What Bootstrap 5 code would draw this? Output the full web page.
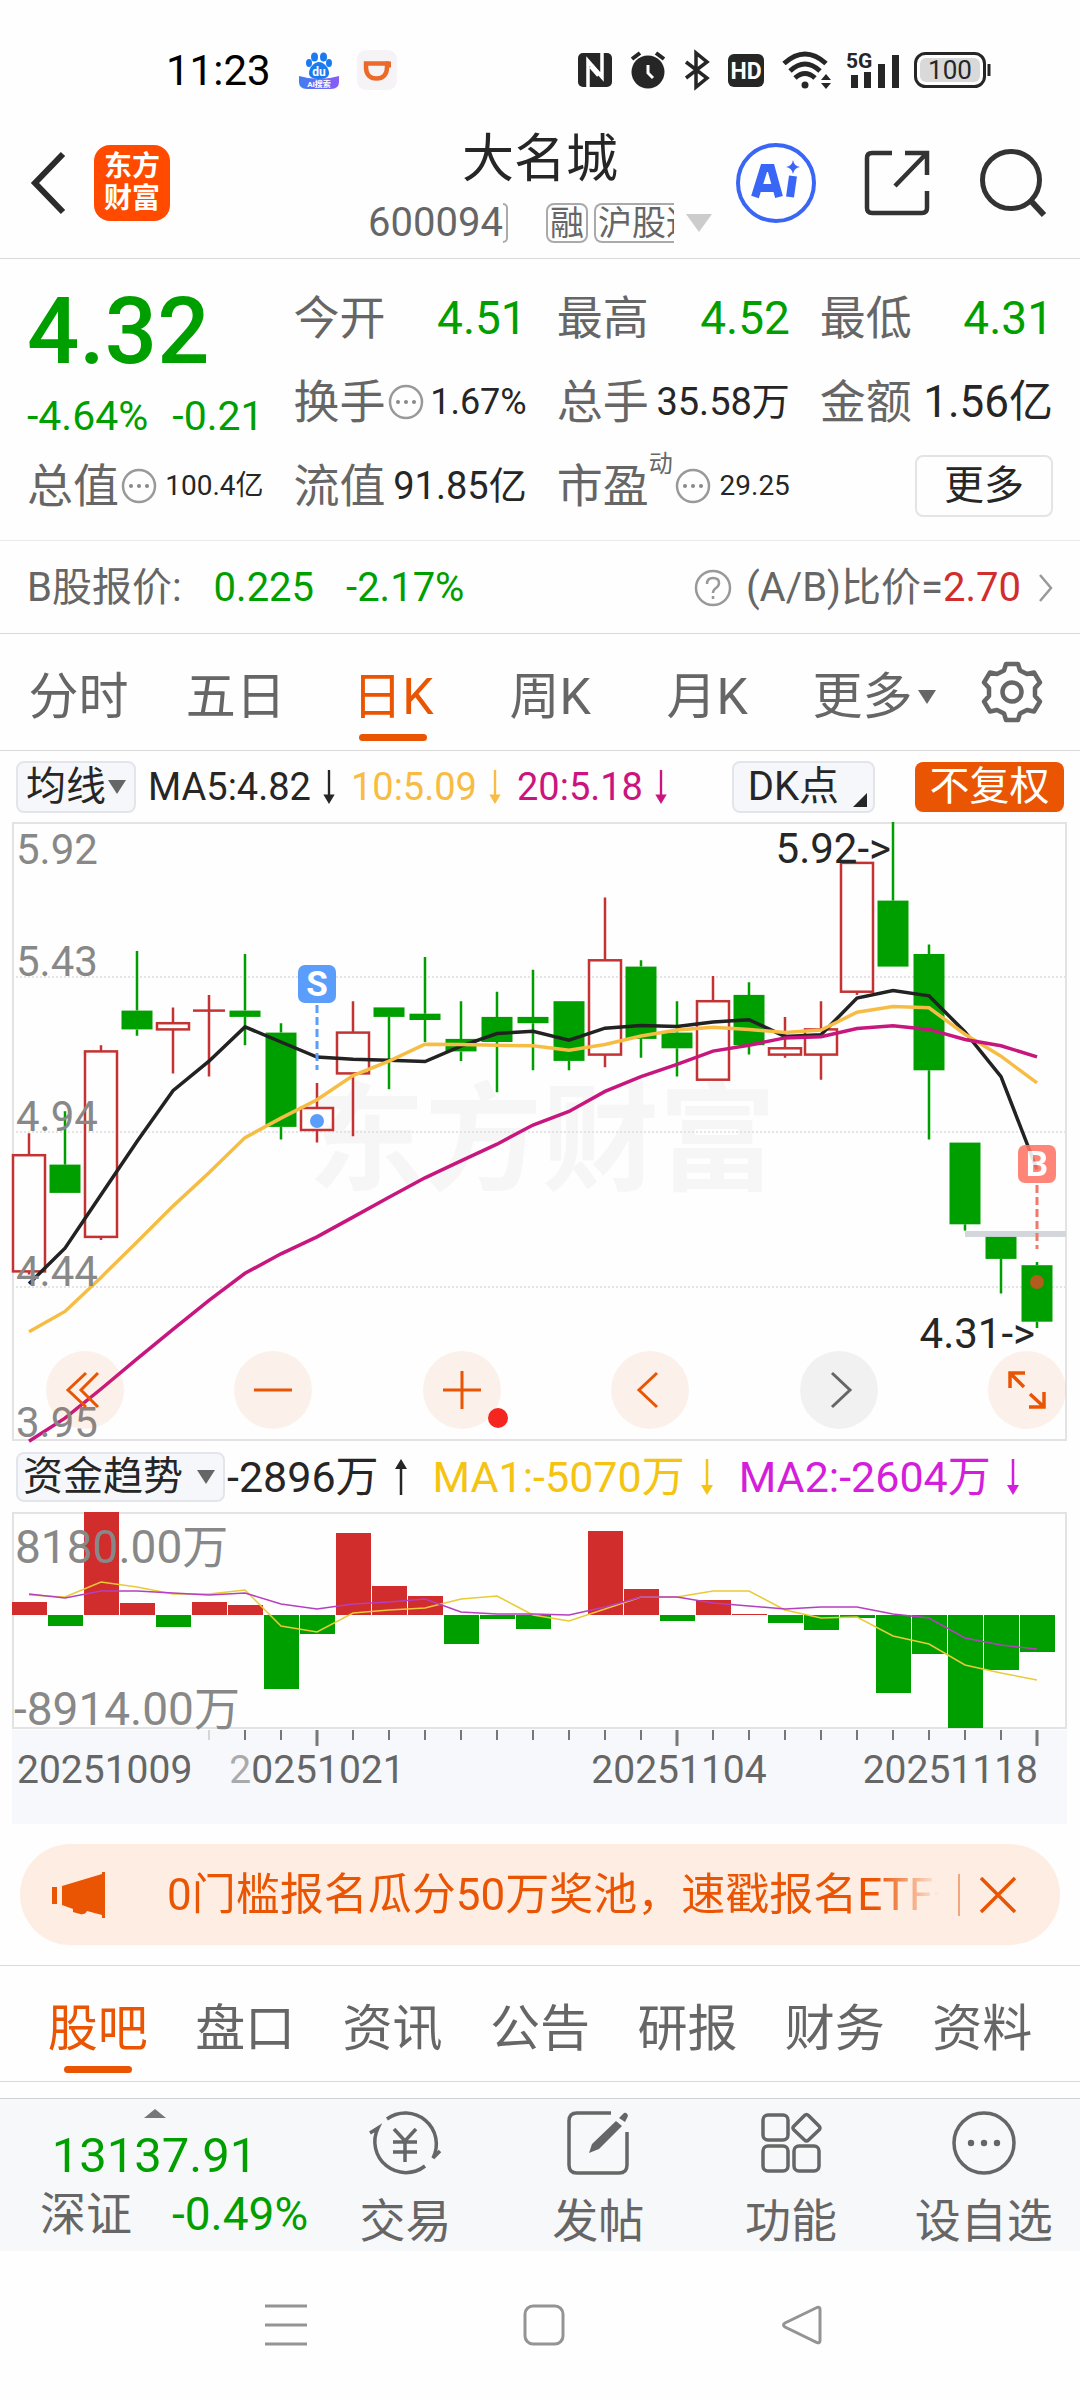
<!DOCTYPE html>
<html lang="zh-CN">
<head>
<meta charset="utf-8">
<meta name="viewport" content="width=device-width, initial-scale=1">
<title>大名城 600094</title>
<link href="https://cdn.jsdelivr.net/npm/bootstrap@5.3.0/dist/css/bootstrap.min.css" rel="stylesheet">
<style>
:root{--up:#d12d2d;--down:#009f00;--accent:#ea5504;--ink:#262626;--muted-ink:#666;--rule:#d9d9d9}
body{font-family:Roboto,"Noto Sans CJK SC",sans-serif;color:var(--ink);background:#fefefe;font-size:40px;line-height:1.5}
svg{display:block;flex:none;overflow:visible}
button,a{color:inherit;text-decoration:none}
.flat{background:none;border:0;padding:0;color:inherit;font:inherit}
.down{color:var(--down)}
.up{color:var(--up)}
.rule-b{border-bottom:1px solid var(--rule)}
.gap-l2{margin-left:2px}.gap-l6{margin-left:6px}.gap-l12{margin-left:12px}.gap-l14{margin-left:14px}.gap-l18{margin-left:18px}.gap-l24{margin-left:24px}.gap-l28{margin-left:28px}.gap-l32{margin-left:32px}.gap-l38{margin-left:38px}.gap-l40{margin-left:40px}.gap-l48{margin-left:48px}.gap-l50{margin-left:50px}
/* status bar */
.statusbar{padding:46px 88px 0 166px;height:94px;color:#000}
.sysicons{color:#262626}
.clock{font-size:42px}
/* header */
.apphead{padding:26px 34px 12px 31px}
.applogo{width:76px;height:76px;border-radius:16px;background:#ff4a00;color:#fff;font-size:28px;line-height:32px;font-weight:700;margin-left:29px}
.stockname{font-size:52px;line-height:80px}
.codeline{font-size:40px;line-height:46px;color:var(--muted-ink)}
.tagbox{border:2px solid #aaa;border-radius:8px;height:40px;line-height:36px;font-size:34px;padding:0 2px;white-space:nowrap}
.tagcut{width:80px;overflow:hidden;border-right:0;border-radius:8px 0 0 8px}
.tagend{width:5px;height:40px;border:2px solid #aaa;border-left:0;border-radius:0 8px 8px 0}
/* quote grid */
.quote{display:grid;grid-template-columns:repeat(4,1fr);column-gap:30px;padding:17px 27px 12px;border-bottom:1px solid #eaeaea}
.quote .cellrow{height:84px;display:flex;align-items:center;justify-content:space-between;white-space:nowrap}
.quote .lbl{font-size:46px;color:var(--muted-ink);display:flex;align-items:center}
.quote .lbl svg{margin-left:2px}
.bigcell{grid-row:span 2;color:var(--down)}
.bigprice{font-size:92px;line-height:112px;font-weight:500}
.chg{font-size:41px;line-height:56px}
.v46{font-size:46px}.v44{font-size:44px}.v38{font-size:38px}.v36{font-size:36px}.v28{font-size:28px}
.dyn{font-size:24px;line-height:24px;align-self:flex-start}
.morebtn{width:138px;height:62px;border:2px solid #e4e4e4;border-radius:8px;font-size:40px;line-height:58px}
.bshare{padding:17px 27px 15px;line-height:60px;color:var(--muted-ink)}
/* tabs */
.tabs{font-size:50px;line-height:60px;color:var(--muted-ink)}
.tabs .nav-link{padding:33px 0 8px;color:inherit;text-align:center;white-space:nowrap}
.tabs .nav-link::after{content:"";display:block;width:68px;height:7px;border-radius:4px;margin:7px auto 0}
.tabs .nav-link.active{color:var(--accent)}
.tabs .nav-link.active::after{background:var(--accent)}
.tabs .withmenu{padding-left:20px}
.gearcell{width:137px;height:116px}
.infotabs{padding:0 24px}
/* indicator rows */
.indrow{padding:10px 16px 9px;font-size:38px;line-height:50px;white-space:nowrap}
.pick{background:#f6f7fb;border:2px solid #e3e5ea;border-radius:8px;font-size:40px;line-height:48px;height:52px;padding:0 8px}
.pickdk{padding:0 6px 0 14px}
.adj{background:var(--accent);color:#fff;border-radius:8px;width:149px;height:50px;line-height:50px;font-size:40px}
.arrow{margin:0 16px 0 12px}
.flowrow{font-size:43px;padding:11px 16px 10px}
.flowrow .pick{height:50px;padding-left:5px}
.flowrow .arrow{margin:0 26px 0 16px}
.ten{color:#f8bc42}.twenty{color:#cc1480}.flow1{color:#f5c413}.flow2{color:#d41edb}
.plot{margin:0 13px 0 12px}
.plot>svg{width:100%;height:auto}
.zoombar{left:34px;right:1px;bottom:12px}
.roundbtn{width:78px;height:78px;border-radius:50%;background:rgba(234,85,4,.08);color:var(--accent)}
.roundbtn.off{background:rgba(0,0,0,.05);color:#666}
.reddot{right:-7px;bottom:1px;width:20px;height:20px;border-radius:50%;background:#f5261f}
/* notice */
.notice{margin:20px 20px 20px;height:101px;border-radius:51px;background:#fdede3;color:var(--accent);font-size:44px;padding:0 44px 0 32px}
.notice .msg{flex:1 1 0;margin-left:61px;overflow:hidden;white-space:nowrap;-webkit-mask-image:linear-gradient(90deg,#000 92%,transparent);mask-image:linear-gradient(90deg,#000 92%,transparent)}
.notice .bar{width:2px;height:42px;background:#f0a67e;margin:0 20px 0 19px}
/* bottom bar */
.dock{margin-top:16px;border-top:1px solid #cfd3d8;background:#f7f8fa;height:153px;color:var(--muted-ink)}
.indexcell{flex:none;width:309px;padding-top:10px}
.indexval{font-size:49px;line-height:56px;padding-top:10px}
.indexsub{font-size:46px;line-height:60px;padding-left:40px;white-space:nowrap}
.dock .tool{flex:1 1 0;font-size:46px;line-height:60px;padding-top:10px}
.dock .tool svg{margin:0 auto 14px}
.sysnav{padding:52px 149px 0 157px;color:#949494}
</style>
</head>
<body>
<div class="statusbar d-flex align-items-center">
  <span class="clock">11:23</span>
  <svg class="gap-l28" width="40" height="40" viewBox="0 0 40 40" role="img" aria-label="百度">
    <defs><linearGradient id="bd" x1="0" x2="1"><stop offset="0" stop-color="#3f7df5"/><stop offset="1" stop-color="#8a5cf6"/></linearGradient></defs>
    <g fill="#1a7af0"><ellipse cx="15.5" cy="7" rx="3.5" ry="4.5"/><ellipse cx="24.5" cy="7" rx="3.5" ry="4.5"/><ellipse cx="10" cy="13" rx="3" ry="4"/><ellipse cx="30" cy="13" rx="3" ry="4"/><path d="M20 12c5 0 10 6 10 11 0 4-4 6-10 6s-10-2-10-6c0-5 5-11 10-11z"/></g>
    <path d="M0 26q20 6 40 0v6q0 7-8 7H8q-8 0-8-7z" fill="url(#bd)"/>
    <text x="20" y="26" font-size="12" font-weight="700" fill="#fff" text-anchor="middle">du</text>
    <text x="20" y="37" font-size="8" font-weight="700" fill="#fff" text-anchor="middle">AI搜索</text>
  </svg>
  <svg class="gap-l18" width="40" height="40" viewBox="0 0 40 40" role="img" aria-label="滴滴">
    <rect width="40" height="40" rx="9" fill="#f6f3f7"/><path d="M9 13.500h21v4c0 7-4 11-10.500 11S9 24.500 9 17.500z" fill="none" stroke="#ec6a29" stroke-width="4.500"/><path d="M28 12.500h5v5" fill="none" stroke="#ec6a29" stroke-width="2"/>
  </svg>
  <div class="sysicons ms-auto d-flex align-items-center">
    <svg width="34" height="36" viewBox="0 0 34 36"><rect y="1" width="34" height="34" rx="5" fill="currentColor"/><path d="M10 35V9l14 16V1" fill="none" stroke="#fff" stroke-width="3.500"/><path d="M13 14l8 9" stroke="#fff" stroke-width="5"/></svg>
    <svg class="gap-l18" width="36" height="38" viewBox="0 0 36 38"><circle cx="18" cy="21" r="16.500" fill="currentColor"/><path d="M2 8l8-6M34 8l-8-6" stroke="currentColor" stroke-width="4"/><path d="M18 14v8l5 5" fill="none" stroke="#fff" stroke-width="3"/></svg>
    <svg class="gap-l18" width="26" height="38" viewBox="0 0 26 38"><path d="M2 11l21 16-11 9V2l11 9L2 27" fill="none" stroke="currentColor" stroke-width="3.500"/></svg>
    <svg class="gap-l18" width="36" height="34" viewBox="0 0 36 34"><rect y="1" width="36" height="33" rx="6" fill="currentColor"/><text x="18" y="26" font-size="23" font-weight="700" fill="#fff" text-anchor="middle">HD</text></svg>
    <svg class="gap-l18" width="50" height="38" viewBox="0 0 50 38"><g fill="none" stroke="currentColor" stroke-width="5"><path d="M2 12.500q21-19 42 0M8 20q15-14 30 0M13 27q10-9 20 0"/></g><circle cx="23" cy="34" r="3.500" fill="currentColor"/><path d="M39 29l5-6 5 6zM39 32h10l-5 6z" fill="currentColor"/></svg>
    <svg class="gap-l14" width="54" height="38" viewBox="0 0 54 38"><text x="0" y="17" font-size="21" font-weight="700" fill="currentColor">5G</text><path d="M5 24h7v13H5zM18 21h7v16h-7zM32 13h7v24h-7zM46 4h7v33h-7z" fill="currentColor"/></svg>
    <svg class="gap-l14" width="78" height="36" viewBox="0 0 78 36"><rect x="1.500" y="1.500" width="69" height="33" rx="10" fill="none" stroke="currentColor" stroke-width="3"/><rect x="6" y="6" width="60" height="24" rx="6" fill="#d9d9d9"/><path d="M75 12v12" stroke="currentColor" stroke-width="3"/><text x="36" y="27" font-size="26" fill="currentColor" text-anchor="middle">100</text></svg>
  </div>
</div>

<header class="apphead rule-b d-flex align-items-center">
  <button class="flat" aria-label="返回"><svg width="34" height="64" viewBox="0 0 34 64"><path d="M32 3L4 32l28 29" fill="none" stroke="#2b2b2b" stroke-width="6"/></svg></button>
  <div class="applogo d-flex flex-column justify-content-center text-center"><span>东方</span><span>财富</span></div>
  <div class="ms-auto">
    <h1 class="stockname text-center fw-normal m-0">大名城</h1>
    <div class="codeline d-flex align-items-center">
      <span>600094</span><span class="tagend"></span>
      <span class="tagbox gap-l38">融</span>
      <span class="tagbox tagcut gap-l6">沪股通</span>
      <svg class="gap-l12" width="26" height="18" viewBox="0 0 26 18"><path d="M0 0h26L13 18z" fill="#ccc"/></svg>
    </div>
  </div>
  <button class="flat gap-l24" aria-label="Ai"><svg width="80" height="80" viewBox="0 0 80 80"><circle cx="40" cy="40" r="38" fill="none" stroke="#3a66f5" stroke-width="4"/><path d="M19 54l9-29h7l8 29M24 45h14" fill="none" stroke="#3a66f5" stroke-width="8"/><path d="M57 33l-3 21" stroke="#3a66f5" stroke-width="8"/><path d="M57 17q1 6 7 7-6 1-7 7-1-6-7-7 6-1 7-7z" fill="#3a66f5"/></svg></button>
  <button class="flat gap-l48" aria-label="分享"><svg width="66" height="66" viewBox="0 0 66 66"><path d="M28 3H8q-5 0-5 5v50q0 5 5 5h50q5 0 5-5V41M63 25V3H41M63 3L31 36" fill="none" stroke="#333" stroke-width="4.500"/></svg></button>
  <button class="flat gap-l50" aria-label="搜索"><svg width="66" height="68" viewBox="0 0 66 68"><circle cx="31" cy="31" r="28.500" fill="none" stroke="#333" stroke-width="5"/><path d="M51 52l13 14" stroke="#333" stroke-width="6"/></svg></button>
</header>

<svg width="0" height="0" class="position-absolute">
  <symbol id="dots" viewBox="0 0 36 36"><circle cx="18" cy="18" r="16" fill="none" stroke="#999" stroke-width="2.500"/><g fill="#888"><circle cx="10" cy="18" r="2"/><circle cx="18" cy="18" r="2"/><circle cx="26" cy="18" r="2"/></g></symbol>
  <symbol id="dn" viewBox="0 0 12 36"><path d="M6 0v30" stroke="currentColor" stroke-width="2.500"/><path d="M0 26h12L6 36z" fill="currentColor"/></symbol>
  <symbol id="tri" viewBox="0 0 18 14"><path d="M0 0h18L9 14z" fill="#666"/></symbol>
</svg>

<section class="quote">
  <div class="bigcell"><div class="bigprice">4.32</div><div class="chg d-flex"><span>-4.64%</span><span class="gap-l24">-0.21</span></div></div>
  <div class="cellrow"><span class="lbl">今开</span><span class="v46 down">4.51</span></div>
  <div class="cellrow"><span class="lbl">最高</span><span class="v46 down">4.52</span></div>
  <div class="cellrow"><span class="lbl">最低</span><span class="v46 down">4.31</span></div>
  <div class="cellrow"><span class="lbl">换手<svg width="36" height="36"><use href="#dots"/></svg></span><span class="v36">1.67%</span></div>
  <div class="cellrow"><span class="lbl">总手</span><span class="v38">35.58万</span></div>
  <div class="cellrow"><span class="lbl">金额</span><span class="v44">1.56亿</span></div>
  <div class="cellrow"><span class="lbl">总值<svg width="36" height="36"><use href="#dots"/></svg></span><span class="v28">100.4亿</span></div>
  <div class="cellrow"><span class="lbl">流值</span><span class="v38">91.85亿</span></div>
  <div class="cellrow"><span class="lbl">市盈<span class="dyn">动</span><svg width="36" height="36"><use href="#dots"/></svg></span><span class="v28">29.25</span></div>
  <div class="cellrow justify-content-end"><button class="flat morebtn">更多</button></div>
</section>

<section class="bshare rule-b d-flex align-items-center">
  <span>B股报价:</span><span class="down gap-l32">0.225</span><span class="down gap-l32">-2.17%</span>
  <svg class="ms-auto" width="38" height="38" viewBox="0 0 38 38"><circle cx="19" cy="19" r="17" fill="none" stroke="#999" stroke-width="2.500"/><path d="M13 15q0-6 6-6t6 5q0 3-3 5t-3 5M19 27v3" fill="none" stroke="#999" stroke-width="2.500"/></svg>
  <a class="gap-l14" href="#">(A/B)比价=<span class="up">2.70</span></a>
  <svg class="gap-l18" width="14" height="28" viewBox="0 0 14 28"><path d="M1 1l11 13L1 27" fill="none" stroke="#999" stroke-width="2.500"/></svg>
</section>

<div class="tabs rule-b d-flex">
  <nav class="nav nav-fill flex-nowrap flex-grow-1">
    <a class="nav-link w-100" href="#">分时</a><a class="nav-link w-100" href="#">五日</a><a class="nav-link w-100 active" href="#">日K</a><a class="nav-link w-100" href="#">周K</a><a class="nav-link w-100" href="#">月K</a>
    <a class="nav-link w-100" href="#"><span class="withmenu d-flex align-items-center justify-content-center">更多<svg class="gap-l6" width="18" height="14"><use href="#tri"/></svg></span></a>
  </nav>
  <button class="flat gearcell d-flex align-items-center justify-content-center" aria-label="设置"><svg width="62" height="62" viewBox="-31 -31 62 62"><g fill="none" stroke="#666" stroke-width="4.500" stroke-linejoin="round"><path d="M-6-28H6l2 6.500 7 3.500 7-1.500 6 10-5 5.500v8l5 5.500-6 10-7-1.500-7 3.500-2 6.500H-6l-2-6.500-7-3.500-7 1.500-6-10 5-5.500v-8l-5-5.500 6-10 7 1.500 7-3.500z"/><circle r="9.500"/></g></svg></button>
</div>

<div class="indrow d-flex align-items-center">
  <button class="flat pick d-flex align-items-center">均线<svg class="gap-l2" width="18" height="14"><use href="#tri"/></svg></button>
  <span class="gap-l12">MA5:4.82</span><svg class="arrow" width="12" height="34"><use href="#dn"/></svg>
  <span class="ten d-flex align-items-center">10:5.09<svg class="arrow" width="12" height="34"><use href="#dn"/></svg></span>
  <span class="twenty d-flex align-items-center">20:5.18<svg class="arrow" width="12" height="34"><use href="#dn"/></svg></span>
  <button class="flat pick pickdk ms-auto d-flex">DK点<svg class="align-self-end mb-1 gap-l14" width="14" height="14" viewBox="0 0 14 14"><path d="M14 0v14H0z" fill="#262626"/></svg></button>
  <button class="flat adj gap-l40">不复权</button>
</div>

<div class="plot position-relative">
  <svg id="kline" viewBox="0 0 1055 619" role="img" aria-label="日K线图"></svg>
  <div class="zoombar position-absolute d-flex justify-content-between">
    <button class="flat roundbtn d-flex align-items-center justify-content-center" aria-label="最早"><svg width="36" height="36" viewBox="0 0 36 36"><path d="M19 1L1 18l18 17M31 1L14 18l17 17" fill="none" stroke="currentColor" stroke-width="3"/></svg></button>
    <button class="flat roundbtn d-flex align-items-center justify-content-center" aria-label="缩小"><svg width="38" height="38" viewBox="0 0 38 38"><path d="M0 19h38" stroke="currentColor" stroke-width="3"/></svg></button>
    <button class="flat roundbtn position-relative d-flex align-items-center justify-content-center" aria-label="放大"><svg width="38" height="38" viewBox="0 0 38 38"><path d="M0 19h38M19 0v38" stroke="currentColor" stroke-width="3"/></svg><span class="reddot position-absolute"></span></button>
    <button class="flat roundbtn d-flex align-items-center justify-content-center" aria-label="左移"><svg width="36" height="36" viewBox="0 0 36 36"><path d="M25 1L7 18l18 17" fill="none" stroke="currentColor" stroke-width="3"/></svg></button>
    <button class="flat roundbtn off d-flex align-items-center justify-content-center" aria-label="右移"><svg width="36" height="36" viewBox="0 0 36 36"><path d="M11 1l18 17-18 17" fill="none" stroke="currentColor" stroke-width="3"/></svg></button>
    <button class="flat roundbtn d-flex align-items-center justify-content-center" aria-label="全屏"><svg width="38" height="38" viewBox="0 0 38 38"><path d="M17 2H2v15M2 2l14 14M36 21v15H21M36 36L22 23" fill="none" stroke="currentColor" stroke-width="3.500"/></svg></button>
  </div>
</div>

<div class="indrow flowrow d-flex align-items-center">
  <button class="flat pick d-flex align-items-center">资金趋势<svg class="gap-l14" width="18" height="14"><use href="#tri"/></svg></button>
  <span class="gap-l2">-2896万</span><svg class="arrow" width="12" height="38" viewBox="0 0 12 36"><path d="M6 36V8" stroke="currentColor" stroke-width="2.500"/><path d="M0 10h12L6 0z" fill="currentColor"/></svg>
  <span class="flow1 d-flex align-items-center">MA1:-5070万<svg class="arrow" width="12" height="38"><use href="#dn"/></svg></span>
  <span class="flow2 d-flex align-items-center">MA2:-2604万<svg class="arrow" width="12" height="38"><use href="#dn"/></svg></span>
</div>

<div class="plot">
  <svg id="flow" viewBox="0 0 1055 312" role="img" aria-label="资金趋势图"></svg>
</div>

<div class="notice d-flex align-items-center">
  <svg width="54" height="46" viewBox="0 0 54 46"><path d="M0 15h5v17H0zM10 14L50 2V0h3v46h-3v-3l-15-4q-2 4-7 3l-7-2v-3l-11-4z" fill="currentColor"/></svg>
  <div class="msg">0门槛报名瓜分50万奖池，速戳报名ETF争霸赛</div>
  <span class="bar"></span>
  <button class="flat" aria-label="关闭"><svg width="36" height="36" viewBox="0 0 36 36"><path d="M1 1l34 34M35 1L1 35" stroke="currentColor" stroke-width="3.500"/></svg></button>
</div>
<div class="rule-b"></div>

<nav class="tabs infotabs rule-b nav nav-fill flex-nowrap">
  <a class="nav-link w-100 active" href="#">股吧</a><a class="nav-link w-100" href="#">盘口</a><a class="nav-link w-100" href="#">资讯</a><a class="nav-link w-100" href="#">公告</a><a class="nav-link w-100" href="#">研报</a><a class="nav-link w-100" href="#">财务</a><a class="nav-link w-100" href="#">资料</a>
</nav>

<footer class="dock d-flex text-center">
  <div class="indexcell">
    <svg class="mx-auto" width="22" height="9" viewBox="0 0 22 9"><path d="M0 9L11 0l11 9z" fill="#777"/></svg>
    <div class="indexval down">13137.91</div>
    <div class="indexsub d-flex">深证<span class="down gap-l40">-0.49%</span></div>
  </div>
  <a href="#" class="tool"><svg width="74" height="68" viewBox="0 0 74 68"><g fill="none" stroke="#666" stroke-width="3.500"><path d="M19 10A31 31 0 0 1 65 49l7-7M57 57A31 31 0 0 1 10 19L2 24"/><path d="M26 20l11 12 11-12M25 33h24M25 43h24M37 32v21"/></g></svg>交易</a>
  <a href="#" class="tool"><svg width="64" height="68" viewBox="0 0 64 68"><path d="M45 4H11q-8 0-8 8v44q0 8 8 8h42q8 0 8-8V23" fill="none" stroke="#666" stroke-width="3.500"/><path d="M50 12l6 5-23 23-10 4 3-9zM53 9l5-5q3-1 4 3l-3 6z" fill="#666"/></svg>发帖</a>
  <a href="#" class="tool"><svg width="62" height="68" viewBox="0 0 62 68"><g fill="none" stroke="#666" stroke-width="3.500"><rect x="3" y="6" width="25" height="25" rx="5"/><rect x="3" y="37" width="25" height="25" rx="5"/><rect x="34" y="37" width="25" height="25" rx="5"/><path d="M44.500 6.500q2-2 4 0L59 17q2 2 0 4L48.500 31q-2 2-4 0L34 21q-2-2 0-4z"/></g></svg>功能</a>
  <a href="#" class="tool"><svg width="68" height="68" viewBox="0 0 68 68"><circle cx="34" cy="34" r="30" fill="none" stroke="#666" stroke-width="3.500"/><g fill="#666"><circle cx="21" cy="34" r="3.200"/><circle cx="34" cy="34" r="3.200"/><circle cx="47" cy="34" r="3.200"/></g></svg>设自选</a>
</footer>

<div class="sysnav d-flex justify-content-around align-items-center">
  <button class="flat" aria-label="菜单"><svg width="42" height="44" viewBox="0 0 42 44"><path d="M0 3h42M0 22h42M0 41h42" stroke="currentColor" stroke-width="3"/></svg></button>
  <button class="flat" aria-label="主页"><svg width="42" height="44" viewBox="0 0 42 44"><rect x="2" y="3" width="38" height="38" rx="8" fill="none" stroke="currentColor" stroke-width="3"/></svg></button>
  <button class="flat" aria-label="后退"><svg width="42" height="44" viewBox="0 0 42 44"><path d="M36 4.500L4 20q-3 2 0 4l32 15.500q3 1 3-2v-31q0-3-3-2z" fill="none" stroke="currentColor" stroke-width="3"/></svg></button>
</div>

<script src="https://cdn.jsdelivr.net/npm/bootstrap@5.3.0/dist/js/bootstrap.bundle.min.js"></script>
<script>
// r = rising day, g = falling day; then high, body top, body bottom, low
const days=[['r',4.93,4.86,4.49,4.48],['g',5,4.83,4.74,4.74],['r',5.21,5.19,4.6,4.59],['g',5.51,5.32,5.26,5.24],['r',5.33,5.28,5.26,5.12],['r',5.37,5.32,5.32,5.11],['g',5.5,5.32,5.3,5.21],['g',5.28,5.25,4.95,4.91],['r',5.09,5.01,4.94,4.9],['r',5.35,5.25,5.12,4.92],['g',5.33,5.33,5.3,5.07],['g',5.49,5.31,5.29,5.22],['g',5.35,5.23,5.19,5.16],['g',5.38,5.3,5.22,5.06],['g',5.45,5.3,5.28,5.13],['g',5.35,5.35,5.16,5.13],['r',5.68,5.48,5.18,5.14],['g',5.48,5.46,5.23,5.17],['g',5.35,5.25,5.2,5.11],['r',5.43,5.35,5.1,5.1],['g',5.41,5.37,5.21,5.18],['r',5.3,5.2,5.18,5.17],['r',5.35,5.26,5.18,5.1],['r',5.79,5.79,5.38,5.37],['g',5.92,5.67,5.46,5.46],['g',5.53,5.5,5.13,4.91],['g',4.9,4.9,4.64,4.62],['g',4.6,4.6,4.53,4.42],['g',4.52,4.51,4.33,4.31]];
const ma5=[4.451,4.564,4.734,4.903,5.065,5.159,5.268,5.22,5.172,5.165,5.162,5.158,5.207,5.247,5.254,5.226,5.264,5.273,5.269,5.284,5.291,5.238,5.243,5.36,5.384,5.367,5.252,5.11,4.815];
const ma10=[4.298,4.363,4.471,4.584,4.698,4.804,4.916,4.978,5.036,5.113,5.159,5.213,5.212,5.21,5.208,5.194,5.212,5.239,5.258,5.267,5.26,5.25,5.258,5.315,5.333,5.329,5.245,5.175,5.09];
const ma20=[3.95,4.023,4.116,4.212,4.306,4.398,4.484,4.546,4.6,4.663,4.726,4.788,4.842,4.895,4.956,4.999,5.063,5.11,5.149,5.191,5.21,5.233,5.237,5.263,5.272,5.26,5.228,5.208,5.173];
const X=i=>17+36*i, Y=p=>Math.round((5.92-p)*3143)/10;
const line=(ys,c,w)=>`<polyline points="${ys.map((y,i)=>X(i)+','+y).join(' ')}" fill="none" stroke="${c}" stroke-width="${w}"/>`;
const txt=(x,y,s,size,fill,anchor='start')=>`<text x="${x}" y="${y}" font-size="${size}" fill="${fill}" text-anchor="${anchor}">${s}</text>`;
let k=`<text x="296" y="359" font-size="117" font-weight="700" fill="#f6f6f6">东方财富</text>`;
[155,310,465].forEach(y=>k+=`<path d="M0 ${y}H1055" stroke="#e4e4e4" stroke-width="2" stroke-dasharray="2 2"/>`);
k+=`<rect x="1" y="1" width="1053" height="617" fill="none" stroke="#e3e3e3" stroke-width="2"/>`;
k+=`<path d="M953 412H1054" stroke="#d3d7db" stroke-width="6"/>`;
days.forEach(([t,h,a,b,l],i)=>{
  const x=X(i),c=t==='r'?'#c43333':'#009f00',top=Y(a),bh=Y(b)-top;
  k+=`<path d="M${x} ${Y(h)}V${top}M${x} ${top+bh}V${Y(l)}" stroke="${c}" stroke-width="2.5"/>`;
  k+=t==='r'?(bh?`<rect x="${x-16}" y="${top}" width="32" height="${bh}" fill="none" stroke="${c}" stroke-width="2.5"/>`:`<path d="M${x-16} ${top}h32" stroke="${c}" stroke-width="2.5"/>`):`<rect x="${x-15.5}" y="${top}" width="31" height="${bh}" fill="${c}"/>`;
});
k+=line(ma5.map(Y),'#222',3.5)+line(ma10.map(Y),'#f6bd45',3.5)+line(ma20.map(Y),'#c7177f',3.5);
k+=`<path d="M305 183V248" stroke="#5b9dfb" stroke-width="3" stroke-dasharray="8 4"/><circle cx="305" cy="299" r="7" fill="#5b9dfb"/><path d="M1025 363V427" stroke="#f0796b" stroke-width="3" stroke-dasharray="8 4"/><circle cx="1025" cy="460" r="7" fill="#b25d1e"/>`;
k+=`<rect x="286" y="143" width="38" height="38" rx="7" fill="#5b9dfb"/><text x="305" y="174" font-size="35" font-weight="700" fill="#fff" text-anchor="middle">S</text><g opacity=".88"><rect x="1006" y="323" width="38" height="38" rx="7" fill="#ff7565"/><text x="1025" y="354" font-size="35" font-weight="700" fill="#fff" text-anchor="middle">B</text></g>`;
[['5.92',42],['5.43',154],['4.94',309],['4.44',464],['3.95',615]].forEach(([s,y])=>k+=txt(4,y,s,42,'#888'));
k+=txt(879,41,'5.92-&gt;',42,'#262626','end')+txt(1023,526,'4.31-&gt;',42,'#262626','end');
document.getElementById('kline').innerHTML=k;

// net inflow per day, in chart units above or below the zero line
const bars=[13,-11,103,12,-12,13,10,-74,-19,82,29,19,-29,-4,-14,0,84,26,-6,15,1,-8,-15,-3,-78,-39,-113,-55,-37];
const f1=[83,85,70,75,82,82,78,114,120,101,98,96,87,84,103,109,97,85,85,79,79,98,106,105,124,132,153,161,168];
const f2=[82,86,79,79,81,83,81,92,97,92,90,87,100,102,102,103,95,85,85,91,94,97,95,95,102,106,126,133,137];
let f=`<rect x="1" y="1" width="1053" height="215" fill="none" stroke="#e3e3e3" stroke-width="2"/><rect y="218" width="1055" height="94" fill="#f7f8fb"/>`;
bars.forEach((v,i)=>f+=`<rect x="${X(i)-17}" y="${v>0?103-v:103}" width="35" height="${Math.abs(v)}" fill="${v>0?'#d12d2d':'#009f00'}"/>`);
f+=line(f1,'#e8cb35',1.5)+line(f2,'#b53fc0',1.5);
f+=txt(3,51,'8180.00万',46,'#888')+txt(2,213,'-8914.00万',46,'#888');
for(let i=5;i<29;i++){const major=i%10===8;f+=`<path d="M${X(i)} 218v${major?16:10}" stroke="${i===5?'#d5d5d5':'#777'}" stroke-width="${major?3:2}"/>`;}
f+=txt(5,271,'20251009',39,'#666')+`<text x="305" y="271" font-size="39" fill="#666" text-anchor="middle"><tspan fill="#aaa">2</tspan>0251021</text>`+txt(667,271,'20251104',39,'#666','middle')+txt(1026,271,'20251118',39,'#666','end');
document.getElementById('flow').innerHTML=f;
</script>
</body>
</html>
